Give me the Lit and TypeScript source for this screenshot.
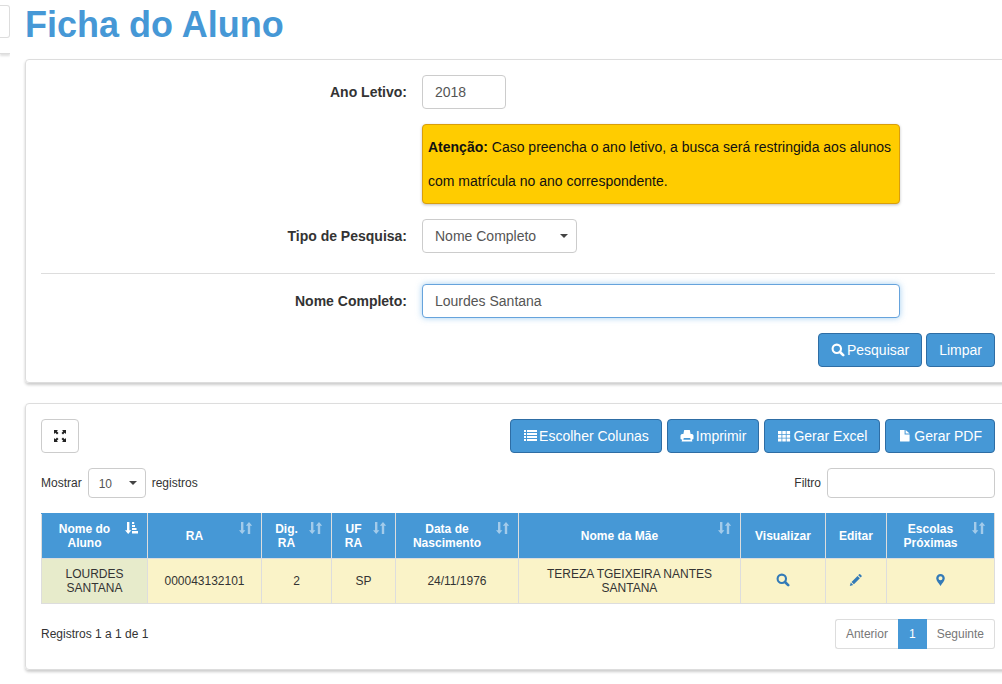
import { LitElement, html, css, svg, nothing } from "lit";
import { customElement, state } from "lit/decorators.js";

const shapes: Record<string, unknown> = {
  search: svg`<circle cx="5.8" cy="5.8" r="4.2" fill="none" stroke="currentColor" stroke-width="2.1"/><path d="M9 9l3.200 3.200" stroke="currentColor" stroke-width="2.600" stroke-linecap="round"/>`,
  list: svg`<path d="M1 1h2v2H1zM4 1h10v2H4zM1 4h2v2H1zM4 4h10v2H4zM1 7h2v2H1zM4 7h10v2H4zM1 10h2v2H1zM4 10h10v2H4z"/>`,
  print: svg`<path fill-rule="evenodd" d="M4.200 1h5.600l.8 4H3.400zM2 5h10q1.200.2 1.500 1.400v3q0 1-1 1h-.7l.6 2.100H1.600l.6-2.100h-.7q-1 0-1-1v-3Q.8 5.200 2 5zM3.800 9l-.5 1.700h7.400L10.200 9z"/>`,
  grid: svg`<path d="M1 2h3.500v3H1zM5.300 2h3.500v3H5.300zM9.600 2h3.500v3H9.600zM1 5.800h3.500v3H1zM5.300 5.800h3.500v3H5.300zM9.600 5.800h3.500v3H9.600zM1 9.600h3.500v3H1zM5.300 9.600h3.500v3H5.300zM9.600 9.600h3.500v3H9.600z"/>`,
  file: svg`<path d="M2 1h4.600v4.400h5v6.600q0 .6-.6.6H2.600q-.6 0-.6-.6zM7.600 1l4 3.600h-4z"/>`,
  expand: svg`<path d="M1 1h4L3.800 2.200l1.700 1.700-1.500 1.500-1.700-1.700L1 5zM13 1v4l-1.300-1.300-1.700 1.700-1.500-1.500 1.700-1.700L9 1zM1 13V9l1.300 1.300L4 8.600l1.500 1.500-1.700 1.700L5 13zM13 13H9l1.200-1.200-1.700-1.700L10 8.600l1.700 1.700L13 9z"/>`,
  sort: svg`<path d="M2 0h2.400v8.200h2L3.200 12 0 8.200h2zM8.800 12h2.400V3.800h2L10 0 6.800 3.800h2z"/>`,
  sorted: svg`<path d="M2 0h2.400v8.200h2L3.200 12 0 8.200h2zM7 0h2.200v2H7zM7 3h3v2H7zM7 6h4.500v2H7zM7 9h6v2.400H7z"/>`,
  pencil: svg`<path d="M.8 13l1-3.400 2.400 2.400zM2.500 8.900l6-6L10.900 5.300l-6 6zM9.200 2.200l.9-.9q.5-.5 1.100 0l1.300 1.300q.5.500 0 1.100l-.9.9z"/>`,
  pin: svg`<path fill-rule="evenodd" d="M7.500 1a4.300 4.300 0 0 1 4.300 4.300C11.800 8 9 10.600 7.500 13 6 10.600 3.200 8 3.200 5.300A4.300 4.300 0 0 1 7.500 1zM7.500 3.300a2 2 0 1 0 0 4 2 2 0 0 0 0-4z"/>`,
};

const icon = (name: string) =>
  html`<svg class="icon" viewBox="0 0 14 14" aria-hidden="true">${shapes[name]}</svg>`;

interface Column {
  label: string;
  share: number;
  sortable: boolean;
}

const columns: Column[] = [
  { label: "Nome do Aluno", share: 106, sortable: true },
  { label: "RA", share: 114, sortable: true },
  { label: "Dig. RA", share: 70, sortable: true },
  { label: "UF RA", share: 64, sortable: true },
  { label: "Data de Nascimento", share: 123, sortable: true },
  { label: "Nome da Mãe", share: 222, sortable: true },
  { label: "Visualizar", share: 85, sortable: false },
  { label: "Editar", share: 61, sortable: false },
  { label: "Escolas Próximas", share: 108, sortable: true },
];
const total = columns.reduce((sum, c) => sum + c.share, 0);

@customElement("app-root")
export class AppRoot extends LitElement {
  @state() private sortedBy = 0;

  static styles = css`
    :host {
      display: flex;
      min-height: 100vh;
      overflow: hidden;
      background: #fff;
      color: #333;
      font: 14px/20px "Liberation Sans", Arial, sans-serif;
    }
    * { box-sizing: border-box; }
    .icon { width: 14px; height: 14px; flex: none; fill: currentColor; }
    button, input, select { font: inherit; color: inherit; margin: 0; }

    .rail {
      flex: none;
      width: 10px;
      height: 54px;
      padding-top: 5px;
      border-bottom: 1px solid #ddd;
      box-shadow: 0 2px 2px rgba(0, 0, 0, 0.12);
      clip-path: inset(0 0 -6px 0);
    }
    .rail-box {
      height: 33px;
      border: 1px solid #ddd;
      border-left: 0;
      border-radius: 0 3px 3px 0;
    }
    .page { flex: 1; min-width: 0; margin: 0 -9px 0 15px; }
    .title {
      margin: 0 0 14px;
      padding-top: 5px;
      color: #4698d6;
      font-size: 36px;
      line-height: 40px;
      font-weight: bold;
    }
    .card {
      margin-bottom: 20px;
      padding: 15px;
      border: 1px solid #ddd;
      border-radius: 4px;
      box-shadow: 0 2px 3px rgba(0, 0, 0, 0.2);
    }
    .card-results { padding-bottom: 20px; }

    .form { display: grid; gap: 15px; }
    .row {
      display: grid;
      grid-template-columns: 366fr 478fr 80fr;
      column-gap: 15px;
      align-items: center;
    }
    .row-label { text-align: right; font-weight: bold; }
    .row-main { grid-column: 2; }
    .divided {
      margin-top: 5px;
      padding-top: 10px;
      border-top: 1px solid #ddd;
    }
    .control {
      width: 100%;
      height: 34px;
      padding: 6px 12px;
      border: 1px solid #ccc;
      border-radius: 4px;
      background-color: #fff;
      color: #555;
      outline: 0;
    }
    .year { width: 84px; }
    .active {
      border-color: #66a3dc;
      box-shadow: 0 0 6px rgba(102, 175, 233, 0.6);
    }
    .select {
      appearance: none;
      background-image: url("data:image/svg+xml,%3Csvg xmlns='http://www.w3.org/2000/svg' width='8' height='4'%3E%3Cpath d='M0 0h8L4 4z' fill='%23444'/%3E%3C/svg%3E");
      background-repeat: no-repeat;
      background-position: right 8px center;
    }
    .kind { width: 155px; }
    .notice {
      margin: 0;
      padding: 5px;
      border: 1px solid #d99e0b;
      border-radius: 4px;
      background: #fc0;
      color: #111;
      line-height: 34px;
      box-shadow: 0 1px 3px rgba(0, 0, 0, 0.25);
    }
    .buttons { display: flex; justify-content: flex-end; gap: 4px; }
    .button {
      display: inline-flex;
      align-items: center;
      gap: 2px;
      height: 34px;
      padding: 6px 12px;
      border: 1px solid #2e6da4;
      border-radius: 4px;
      background: #4698d6;
      color: #fff;
      white-space: nowrap;
      cursor: pointer;
    }
    .plain { padding: 6px 11px; border-color: #ccc; background: #fff; color: #222; }

    .bar { display: flex; justify-content: space-between; align-items: center; }
    .tools { display: flex; gap: 5px; }
    .small { font-size: 12px; }
    .filters { margin: 15px 0; }
    .inline { display: flex; align-items: center; gap: 6px; }
    .compact { height: 30px; padding: 5px 10px; }
    .length { width: 58px; }
    .filter { width: 168px; }

    .table {
      width: 100%;
      margin-bottom: 15px;
      border-collapse: collapse;
      table-layout: fixed;
      font-size: 12px;
      line-height: 14px;
      text-align: center;
    }
    .th {
      padding: 0;
      border: 1px solid #ddd;
      border-top-color: #4698d6;
      background: #4698d6;
      color: #fff;
    }
    .sort {
      display: flex;
      align-items: center;
      gap: 6px;
      width: 100%;
      min-height: 44px;
      padding: 8px;
      border: 0;
      background: none;
      font-weight: bold;
      cursor: pointer;
    }
    .sort-label { flex: 1; }
    .sort .icon { align-self: flex-start; opacity: 0.5; }
    .sort.current .icon { opacity: 1; }
    .td {
      padding: 8px;
      border: 1px solid #ddd;
      background: #faf3c8;
      vertical-align: middle;
    }
    .td-sorted { background: #e7ebcb; }
    .action { display: inline-block; height: 14px; color: #337ab7; }

    .pager { display: flex; }
    .page-link {
      height: 30px;
      padding: 5px 10px;
      border: 1px solid #ddd;
      line-height: 18px;
      color: #777;
      text-decoration: none;
    }
    .page-link:first-child { border-right: 0; border-radius: 3px 0 0 3px; }
    .page-link:last-child { border-left: 0; border-radius: 0 3px 3px 0; }
    .page-current { border-color: #4698d6; background: #4698d6; color: #fff; }
  `;

  private header(c: Column, i: number) {
    const current = i === this.sortedBy;
    return html`<th class="th" scope="col" aria-sort=${current ? "ascending" : nothing}>
      ${c.sortable
        ? html`<button class="sort ${current ? "current" : ""}" type="button" @click=${() => (this.sortedBy = i)}>
            <span class="sort-label">${c.label}</span>${icon(current ? "sorted" : "sort")}
          </button>`
        : c.label}
    </th>`;
  }

  render() {
    const cells = [
      "LOURDES SANTANA",
      "000043132101",
      "2",
      "SP",
      "24/11/1976",
      "TEREZA TGEIXEIRA NANTES SANTANA",
      html`<a class="action" href="#" aria-label="Visualizar">${icon("search")}</a>`,
      html`<a class="action" href="#" aria-label="Editar">${icon("pencil")}</a>`,
      html`<a class="action" href="#" aria-label="Escolas Próximas">${icon("pin")}</a>`,
    ];
    return html`
      <aside class="rail"><div class="rail-box"></div></aside>
      <main class="page">
        <h1 class="title">Ficha do Aluno</h1>

        <form class="card form" @submit=${(e: Event) => e.preventDefault()}>
          <div class="row">
            <label class="row-label" for="year">Ano Letivo:</label>
            <input class="control year" id="year" value="2018" />
          </div>
          <div class="row">
            <p class="notice row-main">
              <strong>Atenção:</strong> Caso preencha o ano letivo, a busca será restringida aos alunos com matrícula no ano correspondente.
            </p>
          </div>
          <div class="row">
            <label class="row-label" for="kind">Tipo de Pesquisa:</label>
            <select class="control select kind" id="kind"><option>Nome Completo</option></select>
          </div>
          <div class="row divided">
            <label class="row-label" for="name">Nome Completo:</label>
            <input class="control active" id="name" value="Lourdes Santana" />
          </div>
          <div class="buttons">
            <button class="button" type="submit">${icon("search")}<span>Pesquisar</span></button>
            <button class="button" type="reset">Limpar</button>
          </div>
        </form>

        <section class="card card-results">
          <div class="bar">
            <button class="button plain" type="button" aria-label="Expandir">${icon("expand")}</button>
            <div class="tools">
              <button class="button" type="button">${icon("list")}<span>Escolher Colunas</span></button>
              <button class="button" type="button">${icon("print")}<span>Imprimir</span></button>
              <button class="button" type="button">${icon("grid")}<span>Gerar Excel</span></button>
              <button class="button" type="button">${icon("file")}<span>Gerar PDF</span></button>
            </div>
          </div>
          <div class="bar small filters">
            <div class="inline">
              <label for="length">Mostrar</label>
              <select class="control select compact length" id="length"><option>10</option></select>
              <span>registros</span>
            </div>
            <div class="inline">
              <label for="filter">Filtro</label>
              <input class="control compact filter" id="filter" type="search" />
            </div>
          </div>
          <table class="table">
            <colgroup>
              ${columns.map((c) => html`<col style="width:${(c.share / total) * 100}%" />`)}
            </colgroup>
            <thead><tr>${columns.map((c, i) => this.header(c, i))}</tr></thead>
            <tbody>
              <tr>${cells.map((v, i) => html`<td class="td ${i === this.sortedBy ? "td-sorted" : ""}">${v}</td>`)}</tr>
            </tbody>
          </table>
          <div class="bar small">
            <span>Registros 1 a 1 de 1</span>
            <nav class="pager" aria-label="Paginação">
              <a class="page-link" href="#">Anterior</a>
              <a class="page-link page-current" href="#" aria-current="page">1</a>
              <a class="page-link" href="#">Seguinte</a>
            </nav>
          </div>
        </section>
      </main>
    `;
  }
}
